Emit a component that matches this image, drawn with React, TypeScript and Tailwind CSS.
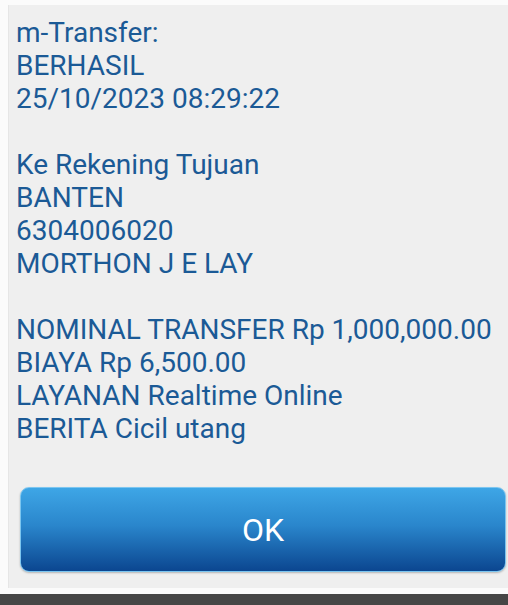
import React from "react";

const lines: string[] = [
  "m-Transfer:",
  "BERHASIL",
  "25/10/2023 08:29:22",
  "",
  "Ke Rekening Tujuan",
  "BANTEN",
  "6304006020",
  "MORTHON J E LAY",
  "",
  "NOMINAL TRANSFER Rp 1,000,000.00",
  "BIAYA Rp 6,500.00",
  "LAYANAN Realtime Online",
  "BERITA Cicil utang",
];

export default function App() {
  return (
    <div
      className="w-[508px] h-[605px] bg-[#fbfbfb] flex flex-col overflow-hidden"
      style={{ fontFamily: "Roboto, 'Noto Sans', sans-serif" }}
    >
      <div className="ml-[8px] mt-[5px] h-[583px] bg-[#efefef] border-l border-[#e6e6e6] flex flex-col">
        <div className="pl-[7px] pt-[11px] text-[28px] leading-[33px] text-[#1b5a96]">
          {lines.map((l, i) => (
            <div key={i} className="h-[33px] whitespace-nowrap">
              {l}
            </div>
          ))}
        </div>
        <div className="mt-[42px] ml-[11px] mr-[2px]">
          <button
            className="w-full h-[85px] rounded-[9px] border border-[#7cc6f0] bg-[linear-gradient(to_bottom,#3ea6e6_0%,#2a86cc_45%,#0b4690_100%)] text-white text-[32px] flex items-center justify-center shadow-[0_1px_2px_rgba(0,0,0,0.25)]"
            style={{ fontFamily: "Roboto, 'Noto Sans', sans-serif" }}
          >
            OK
          </button>
        </div>
      </div>
      <div className="flex-1 bg-[#fbfbfb]" />
      <div className="h-[11px] bg-[#464646]" />
    </div>
  );
}
